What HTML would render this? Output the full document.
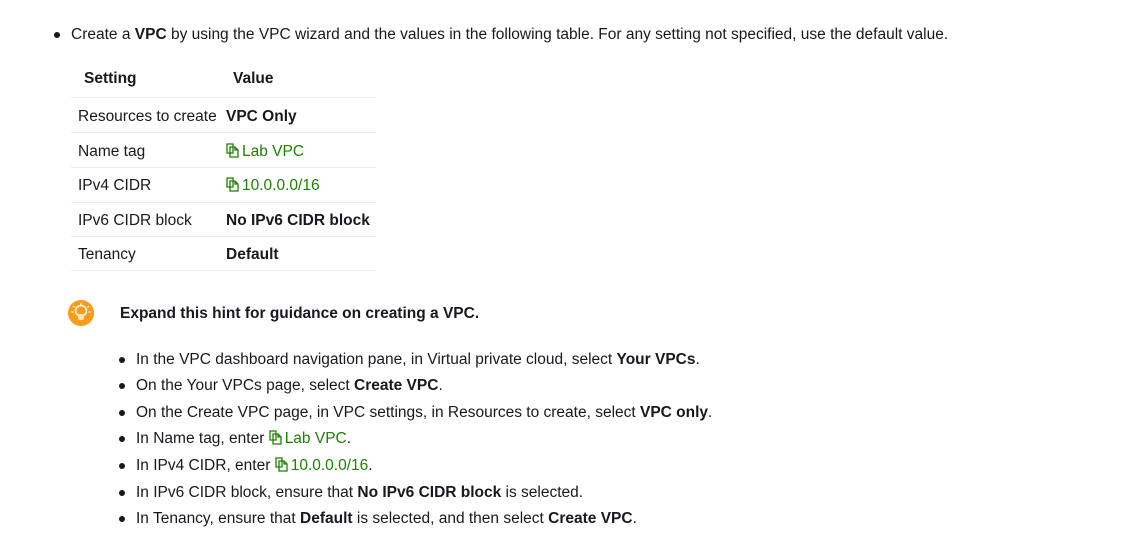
<!DOCTYPE html>
<html><head><meta charset="utf-8"><style>
body{margin:0;background:#fff;font-family:"Liberation Sans","DejaVu Sans",sans-serif;font-size:15.5px;color:#16191f;width:1133px;height:533px;overflow:hidden;position:relative}
.a{position:absolute;white-space:nowrap;line-height:20px}
.dot{position:absolute;width:6px;height:6px;border-radius:50%;background:#16191f}
.g{color:#1d8102}
.hl{position:absolute;left:71px;width:305px;height:1px;background:#e9ebed}
svg.c{width:14px;height:15px;vertical-align:-2px;margin-right:2px}
</style></head><body>
<div class="dot" style="left:54px;top:32px"></div>
<div class="a" style="left:71px;top:25px">Create a <b>VPC</b> by using the VPC wizard and the values in the following table. For any setting not specified, use the default value.</div>

<div class="a" style="left:84px;top:69px"><b>Setting</b></div>
<div class="a" style="left:233px;top:69px"><b>Value</b></div>
<div class="hl" style="top:97px"></div>
<div class="a" style="left:78px;top:107px">Resources to create</div><div class="a" style="left:226px;top:107px"><b>VPC Only</b></div>
<div class="hl" style="top:132px"></div>
<div class="a" style="left:78px;top:142px">Name tag</div><div class="a g" style="left:226px;top:142px"><svg class="c" viewBox="0 0 14 15"><path d="M1 1h6v9H1z M4 4h5l3 3v7H4z M9 4v3h3" fill="none" stroke="#1d8102" stroke-width="1.3"/></svg>Lab VPC</div>
<div class="hl" style="top:167px"></div>
<div class="a" style="left:78px;top:176px">IPv4 CIDR</div><div class="a g" style="left:226px;top:176px"><svg class="c" viewBox="0 0 14 15"><path d="M1 1h6v9H1z M4 4h5l3 3v7H4z M9 4v3h3" fill="none" stroke="#1d8102" stroke-width="1.3"/></svg>10.0.0.0/16</div>
<div class="hl" style="top:202px"></div>
<div class="a" style="left:78px;top:211px">IPv6 CIDR block</div><div class="a" style="left:226px;top:211px"><b>No IPv6 CIDR block</b></div>
<div class="hl" style="top:236px"></div>
<div class="a" style="left:78px;top:245px">Tenancy</div><div class="a" style="left:226px;top:245px"><b>Default</b></div>
<div class="hl" style="top:270px"></div>

<svg style="position:absolute;left:68px;top:300px" width="26" height="26" viewBox="0 0 26 26"><circle cx="13" cy="13" r="13" fill="#f89c1c"/><path d="M10 17h6M10.5 19h5M9.5 15c-1.5-1.5-2-2.5-2-4a5.5 5.5 0 0 1 11 0c0 1.5-.5 2.5-2 4z" fill="none" stroke="#fff" stroke-width="1.4"/><path d="M13 3v2M5 6l1.5 1.5M21 6l-1.5 1.5M3.5 12h2M20.5 12h2" stroke="#fff" stroke-width="1.2"/></svg>
<div class="a" style="left:120px;top:304px"><b>Expand this hint for guidance on creating a VPC.</b></div>

<div class="dot" style="left:119px;top:357px"></div><div class="a" style="left:136px;top:350px">In the VPC dashboard navigation pane, in Virtual private cloud, select <b>Your VPCs</b>.</div>
<div class="dot" style="left:119px;top:383px"></div><div class="a" style="left:136px;top:376px">On the Your VPCs page, select <b>Create VPC</b>.</div>
<div class="dot" style="left:119px;top:410px"></div><div class="a" style="left:136px;top:403px">On the Create VPC page, in VPC settings, in Resources to create, select <b>VPC only</b>.</div>
<div class="dot" style="left:119px;top:436px"></div><div class="a" style="left:136px;top:429px">In Name tag, enter <span class="g"><svg class="c" viewBox="0 0 14 15"><path d="M1 1h6v9H1z M4 4h5l3 3v7H4z M9 4v3h3" fill="none" stroke="#1d8102" stroke-width="1.3"/></svg>Lab VPC</span>.</div>
<div class="dot" style="left:119px;top:463px"></div><div class="a" style="left:136px;top:456px">In IPv4 CIDR, enter <span class="g"><svg class="c" viewBox="0 0 14 15"><path d="M1 1h6v9H1z M4 4h5l3 3v7H4z M9 4v3h3" fill="none" stroke="#1d8102" stroke-width="1.3"/></svg>10.0.0.0/16</span>.</div>
<div class="dot" style="left:119px;top:490px"></div><div class="a" style="left:136px;top:483px">In IPv6 CIDR block, ensure that <b>No IPv6 CIDR block</b> is selected.</div>
<div class="dot" style="left:119px;top:516px"></div><div class="a" style="left:136px;top:509px">In Tenancy, ensure that <b>Default</b> is selected, and then select <b>Create VPC</b>.</div>
</body></html>
